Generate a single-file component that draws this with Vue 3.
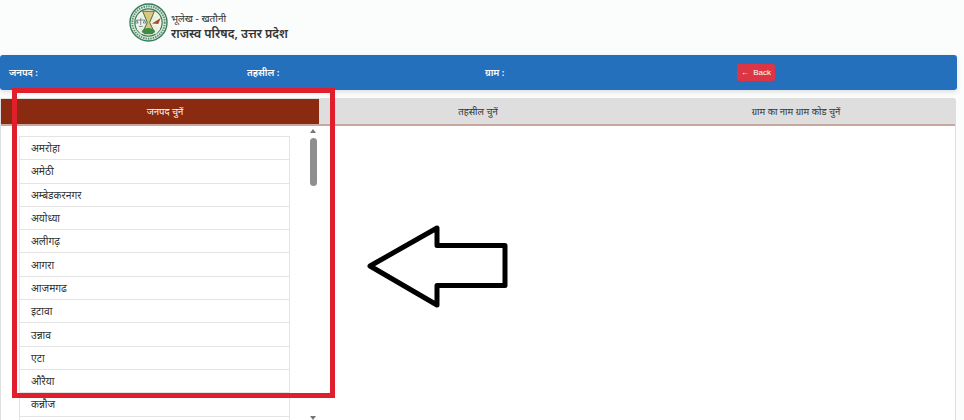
<script setup>
const districts = ['अमरोहा','अमेठी','अम्बेडकरनगर','अयोध्या','अलीगढ़','आगरा','आजमगढ','इटावा','उन्नाव','एटा','औरैया','कन्नौज','']
</script>

<template>
  <div class="page">
    <header class="brand">
      <svg class="logo" viewBox="0 0 40 40" role="img" aria-label="राजस्व परिषद">
        <circle cx="20" cy="20" r="19" fill="#e3ecdf" stroke="#2f7d5b" stroke-width="1.4"/>
        <circle cx="20" cy="20" r="16.600" fill="none" stroke="#5f8f70" stroke-width="2" stroke-dasharray="1.5 1"/>
        <circle cx="20" cy="20" r="14" fill="#f5f4e6" stroke="#2f7d5b" stroke-width="1.2"/>
        <path d="M8 13h24L23 20.500l9 6.500-4 4.500H12L8 27l9-6.500z" fill="#e9f0e2"/>
        <path d="M14 8.500h12l-4.800 11.500 4.800 10h-12l4.800-10z" fill="#d9c67f" stroke="#4a6e45" stroke-width="1"/>
        <path d="M8 17.500h8M12 15.500v7M10 24h4M8 17.500l-1.500 3h3zM16 17.500l-1.500 3h3z" fill="none" stroke="#55707c" stroke-width=".8"/>
        <path d="M23.500 21l9-5.500-2.500 6z" fill="#a5512b"/>
        <path d="M13 29c3-4.500 10-4.500 14 0l-3 3h-8z" fill="#3f8a45"/>
      </svg>
      <div class="brand-text">
        <span class="brand-sub">भूलेख - खतौनी</span>
        <strong class="brand-main">राजस्व परिषद, उत्तर प्रदेश</strong>
      </div>
    </header>

    <section class="bar">
      <span class="bar-label">जनपद :</span>
      <span class="bar-label">तहसील :</span>
      <span class="bar-label">ग्राम :</span>
      <button class="back" type="button"><span class="back-arrow">←</span> Back</button>
    </section>

    <section class="panel">
      <nav class="tabs">
        <div class="tab tab-active">जनपद चुनें</div>
        <div class="tab">तहसील चुनें</div>
        <div class="tab">ग्राम का नाम ग्राम कोड चुनें</div>
      </nav>
      <div class="content">
        <div class="column">
          <ul class="list">
            <li v-for="(d, i) in districts" :key="i" class="item">{{ d }}</li>
          </ul>
          <div class="scrollbar">
            <span class="scroll-up"></span>
            <span class="thumb"></span>
            <span class="scroll-down"></span>
          </div>
        </div>
      </div>
    </section>

    <div class="red-box"></div>
    <svg class="arrow" viewBox="0 0 144 84" aria-hidden="true">
      <path d="M5 41 72 3V20.500H140V60.500H72V80Z" fill="#fff" stroke="#000" stroke-width="5" stroke-linejoin="round"/>
    </svg>
  </div>
</template>

<style scoped>
.page {
  position: relative;
  width: 964px;
  height: 420px;
  overflow: hidden;
  background: #fbfcfc;
  font-family: "Noto Sans", "Liberation Sans", sans-serif;
  color: #333;
}
.brand {
  height: 55px;
  box-sizing: border-box;
  padding: 3px 0 0 129px;
  display: flex;
  align-items: flex-start;
  gap: 3px;
}
.logo { width: 39px; height: 39px; flex: none; }
.brand-text {
  display: flex;
  flex-direction: column;
  padding-top: 8px;
  line-height: 15px;
}
.brand-sub { font-size: 10px; color: #333; }
.brand-main { font-size: 12.200px; color: #333; font-weight: 600; }
.bar {
  width: 957px;
  height: 35px;
  box-sizing: border-box;
  background: #2470bd;
  border-radius: 3px;
  box-shadow: 0 2px 5px rgba(0,0,0,.12);
  display: flex;
  align-items: center;
  padding-left: 9px;
  margin-bottom: 8px;
}
.bar-label {
  color: #fff;
  font-size: 9.500px;
  font-weight: 600;
  width: 238px;
  flex: none;
}
.back {
  margin-left: 14px;
  width: 38px;
  height: 17px;
  padding: 0;
  border: 0;
  border-radius: 2px;
  background: #dc3545;
  color: #fff;
  font: 500 8px "Liberation Sans", sans-serif;
}
.back-arrow { margin-right: 2px; }
.panel {
  width: 956px;
  height: 322px;
  box-sizing: border-box;
  background: #fff;
  border: 1px solid #dedede;
  border-bottom: 0;
  border-radius: 3px 3px 0 0;
}
.tabs {
  display: grid;
  grid-template-columns: 318px 1fr 1fr;
  height: 27px;
  background: #dedede;
  border-bottom: 2px solid #c9a79d;
  box-sizing: border-box;
}
.tab {
  display: flex;
  align-items: center;
  justify-content: center;
  font-size: 9.500px;
  color: #333;
}
.tab-active {
  background: #8a2a10;
  color: #fff;
  padding-left: 10px;
}
.content { padding: 10px 0 0 18px; }
.column {
  display: flex;
  width: 300px;
}
.list {
  list-style: none;
  margin: 0;
  padding: 0;
  width: 271px;
  box-sizing: border-box;
  border: 1px solid #e4e4e4;
  flex: none;
}
.item {
  height: 23.300px;
  box-sizing: border-box;
  border-bottom: 1px solid #e4e4e4;
  padding-left: 11px;
  display: flex;
  align-items: center;
  font-size: 10.300px;
  color: #333;
}
.scrollbar {
  position: relative;
  width: 8px;
  margin-left: 20px;
  height: 285px;
  flex: none;
}
.thumb {
  position: absolute;
  left: 0;
  top: 2px;
  width: 7px;
  height: 48px;
  background: #8f8f8f;
  border-radius: 4px;
}
.scroll-up, .scroll-down {
  position: absolute;
  left: 0;
  width: 0;
  height: 0;
  border-left: 3.500px solid transparent;
  border-right: 3.500px solid transparent;
}
.scroll-up { top: -7px; border-bottom: 4px solid #777; }
.scroll-down { top: 280px; border-top: 4px solid #777; }
.red-box {
  position: absolute;
  left: 12px;
  top: 88px;
  width: 323px;
  height: 310px;
  box-sizing: border-box;
  border: 5px solid #e01e2c;
}
.arrow {
  position: absolute;
  left: 365px;
  top: 225px;
  width: 144px;
  height: 84px;
}
</style>
